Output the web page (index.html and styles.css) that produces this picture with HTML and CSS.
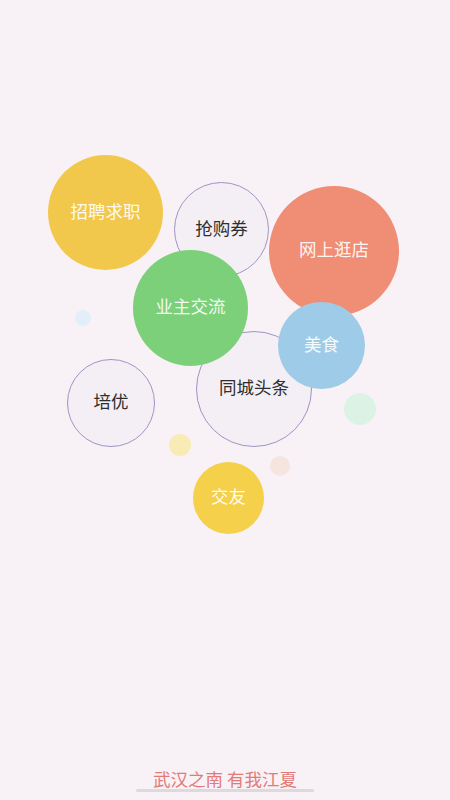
FILE: index.html
```html
<!DOCTYPE html>
<html lang="zh-CN">
<head>
<meta charset="utf-8">
<title>武汉之南 有我江夏</title>
<link rel="stylesheet" href="styles.css">
</head>
<body>
<div class="page">
  <div class="stage">
    <span class="dot dot-blue"></span>
    <span class="dot dot-green"></span>
    <span class="dot dot-yellow"></span>
    <span class="dot dot-peach"></span>
    <div class="bubble outline b-qiang">抢购券</div>
    <div class="bubble filled b-zhao">招聘求职</div>
    <div class="bubble filled b-wang">网上逛店</div>
    <div class="bubble outline b-tong">同城头条</div>
    <div class="bubble filled b-ye">业主交流</div>
    <div class="bubble filled b-mei">美食</div>
    <div class="bubble outline b-pei">培优</div>
    <div class="bubble filled b-jiao">交友</div>
  </div>
  <footer class="footer">
    <div class="slogan">武汉之南 有我江夏</div>
    <div class="bar"></div>
  </footer>
</div>
</body>
</html>
```

FILE: styles.css
```css
html, body {
  margin: 0;
  padding: 0;
}
body {
  background: #f8f2f6;
  font-family: "Noto Sans CJK SC", "Noto Sans", sans-serif;
}
.page {
  height: 800px;
  display: flex;
  flex-direction: column;
}
.stage {
  position: relative;
  flex: 1;
}
.bubble {
  position: absolute;
  border-radius: 50%;
  display: flex;
  align-items: center;
  justify-content: center;
  font-size: 17.5px;
  line-height: 20px;
  padding-bottom: 4px;
  box-sizing: border-box;
}
.filled {
  color: rgba(255, 255, 255, 0.92);
}
.outline {
  background: #f3eff4;
  border: 1.5px solid #a094c6;
  color: #2e2e2e;
}
.dot {
  position: absolute;
  border-radius: 50%;
}
.dot-blue { left: 75px; top: 310px; width: 16px; height: 16px; background: #e2eef8; }
.dot-green { left: 344px; top: 393px; width: 32px; height: 32px; background: #dcf2e4; }
.dot-yellow { left: 169px; top: 434px; width: 22px; height: 22px; background: #f8ecb4; }
.dot-peach { left: 270px; top: 456px; width: 20px; height: 20px; background: #f6e4de; }

.b-zhao { left: 48px; top: 155px; width: 115px; height: 115px; background: #f2c84c; }
.b-qiang { left: 174px; top: 182px; width: 95px; height: 95px; }
.b-wang { left: 269px; top: 186px; width: 130px; height: 130px; background: #f08d75; }
.b-tong { left: 196px; top: 331px; width: 116px; height: 116px; }
.b-ye { left: 133px; top: 250px; width: 115px; height: 116px; background: #7dd07a; }
.b-mei { left: 278px; top: 302px; width: 87px; height: 87px; background: #9ecbe7; }
.b-pei { left: 67px; top: 359px; width: 88px; height: 88px; }
.b-jiao { left: 193px; top: 462px; width: 71px; height: 72px; background: #f5d04a; }

.footer {
  display: flex;
  flex-direction: column;
  align-items: center;
  padding-bottom: 8px;
}
.slogan {
  font-size: 17.5px;
  line-height: 18px;
  color: #e27a78;
  padding-bottom: 1px;
}
.bar {
  width: 178px;
  height: 3px;
  background: #dcdadc;
  border-radius: 2px;
}
```
